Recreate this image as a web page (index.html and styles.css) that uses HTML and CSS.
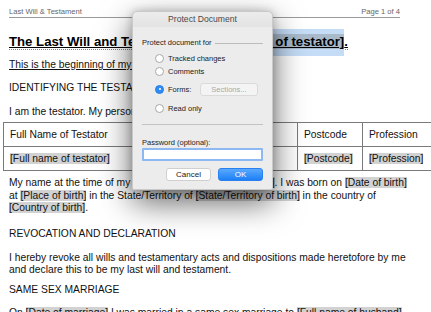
FILE: index.html
```html
<!DOCTYPE html>
<html lang="en">
<head>
    <meta charset="UTF-8">
    <meta name="viewport" content="width=device-width, initial-scale=1.0">
    <title>Last Will &amp; Testament</title>
    <link rel="stylesheet" href="styles.css">
</head>
<body>
    <div class="page">
        <div class="doc-header">
            <span>Last Will &amp; Testament</span>
            <span>Page 1 of 4</span>
        </div>

        <h1 class="title"><span class="squiggle">The Last Will and Testament of <span class="selected"><span class="field">[Full name of testator]</span></span>.</span></h1>

        <p class="lead">This is the beginning of my will.</p>

        <p class="heading">IDENTIFYING THE TESTATOR</p>
        <p class="intro">I am the testator. My personal details are as follows:</p>

        <table class="details">
            <tr>
                <td class="col-name">Full Name of Testator</td>
                <td class="col-address">Address</td>
                <td class="col-postcode">Postcode</td>
                <td class="col-job">Profession</td>
            </tr>
            <tr>
                <td><span class="field">[Full name of testator]</span></td>
                <td><span class="field">[Address]</span></td>
                <td><span class="field">[Postcode]</span></td>
                <td><span class="field">[Profession]</span></td>
            </tr>
        </table>

        <p class="birth">My name at the time of my birth was <span class="field">[Full name(s) at birth]</span>. I was born on <span class="field">[Date of birth]</span><br>
        at <span class="field">[Place of birth]</span> in the State/Territory of <span class="field">[State/Territory of birth]</span> in the country of<br>
        <span class="field">[Country of birth]</span>.</p>

        <p class="heading revoke">REVOCATION AND DECLARATION</p>
        <p class="declare">I hereby revoke all wills and testamentary acts and dispositions made heretofore by me<br>
        and declare this to be my last will and testament.</p>

        <p class="heading marriage">SAME SEX MARRIAGE</p>
        <p class="married">On <span class="field">[Date of marriage]</span> I was married in a same sex marriage to <span class="field">[Full name of husband]</span></p>
    </div>

    <div class="dialog">
        <div class="dialog-title">Protect Document</div>
        <div class="dialog-body">
            <div class="group-label">
                <span>Protect document for</span>
                <span class="rule"></span>
            </div>
            <div class="option first">
                <span class="radio"></span>
                <span>Tracked changes</span>
            </div>
            <div class="option">
                <span class="radio"></span>
                <span>Comments</span>
            </div>
            <div class="option forms">
                <span class="radio checked"></span>
                <span class="forms-label">Forms:</span>
                <span class="btn-sections">Sections...</span>
            </div>
            <div class="option readonly">
                <span class="radio"></span>
                <span>Read only</span>
            </div>
            <div class="separator"></div>
            <div class="password-label">Password (optional):</div>
            <div class="password-box"></div>
            <div class="buttons">
                <span class="btn">Cancel</span>
                <span class="btn btn-ok">OK</span>
            </div>
        </div>
    </div>
</body>
</html>
```

FILE: styles.css
```css
body {
    margin: 0;
    background: #fff;
    font-family: "Liberation Sans", Arial, sans-serif;
    font-size: 10.3px;
    color: #111;
    overflow: hidden;
    height: 312px;
}
p {
    margin: 0;
    line-height: 12px;
    white-space: nowrap;
}
.page {
    padding: 7px 0 0 9px;
}
.doc-header {
    width: 391px;
    display: flex;
    justify-content: space-between;
    font-size: 7.6px;
    line-height: 10px;
    color: #666;
    border-bottom: 1px solid #9a9a9a;
}
.title {
    margin: 16px 0 0;
    font-size: 13.2px;
    line-height: 16px;
    white-space: nowrap;
    text-decoration: underline;
    color: #000;
}
.squiggle {
    border-bottom: 1px dotted #3fb43f;
}
.selected {
    background: #c4dcf6;
    padding: 5px 0 7px;
}
.title .field {
    background: #a9bacb;
}
.field {
    background: #d2d2d2;
}
.lead {
    margin-top: 9px;
    text-decoration: underline;
}
.heading {
    margin-top: 11px;
}
.intro {
    margin-top: 12px;
}
.details {
    margin: 4px 0 0 -6px;
    width: 440px;
    border-collapse: collapse;
    white-space: nowrap;
}
.details td {
    border: 1px solid #7a7a7a;
    padding: 0 6px;
    height: 23px;
    font-size: 10.3px;
}
.col-name { width: 140px; }
.col-address { width: 128px; }
.col-postcode { width: 52px; }
.birth {
    margin-top: 6px;
    line-height: 12.5px;
}
.revoke {
    margin-top: 13px;
}
.declare {
    margin-top: 12px;
    line-height: 12.5px;
}
.marriage {
    margin-top: 7px;
}
.married {
    margin-top: 11px;
}

/* dialog */
.dialog {
    position: absolute;
    left: 132px;
    top: 11px;
    width: 141px;
    height: 179px;
    box-sizing: border-box;
    background: #ececec;
    border: 1px solid #c9c9c9;
    border-radius: 5px 5px 2px 2px;
    box-shadow: 0 12px 32px rgba(0, 0, 0, 0.62), 0 0 8px rgba(0, 0, 0, 0.2);
    font-size: 7.5px;
    color: #222;
}
.dialog-title {
    height: 15px;
    line-height: 15px;
    text-align: center;
    font-size: 8.6px;
    color: #4a4a4a;
    background: linear-gradient(#ececec, #e3e3e3);
    border-radius: 5px 5px 0 0;
}
.dialog-body {
    padding: 10px 9px 0 9px;
    display: flex;
    flex-direction: column;
}
.group-label {
    display: flex;
    align-items: center;
    gap: 3px;
    height: 10px;
}
.group-label .rule {
    flex: 1;
    height: 1px;
    background: #bcbcbc;
    margin-top: 2px;
}
.option {
    display: flex;
    align-items: center;
    gap: 4px;
    height: 10px;
    margin: 3px 0 0 13px;
}
.option.first {
    margin-top: 6px;
}
.option.forms {
    margin-top: 7px;
    height: 12px;
}
.option.readonly {
    margin-top: 8px;
}
.radio {
    width: 7px;
    height: 7px;
    border: 1px solid #a8a8a8;
    border-radius: 50%;
    background: #fff;
    flex: none;
}
.radio.checked {
    background: #2d8cf6;
    border-color: #2a7fe0;
    position: relative;
}
.radio.checked::after {
    content: "";
    position: absolute;
    left: 2.5px;
    top: 2.5px;
    width: 2px;
    height: 2px;
    border-radius: 50%;
    background: #fff;
}
.forms-label {
    width: 28px;
}
.btn-sections {
    width: 56px;
    height: 11px;
    line-height: 11px;
    text-align: center;
    background: #f4f4f4;
    border: 1px solid #dadada;
    border-radius: 3px;
    color: #a8a8a8;
    font-size: 7.6px;
}
.separator {
    height: 1px;
    background: #c2c2c2;
    margin-top: 11px;
}
.password-label {
    margin-top: 13px;
    height: 10px;
    line-height: 10px;
}
.password-box {
    margin-top: 0;
    height: 9px;
    background: #fff;
    border: 2px solid #8db8f2;
    border-radius: 1px;
}
.buttons {
    display: flex;
    justify-content: flex-end;
    gap: 7px;
    margin-top: 7px;
}
.btn {
    width: 43px;
    height: 11px;
    line-height: 11px;
    text-align: center;
    background: #fff;
    border: 1px solid #cfcfcf;
    border-radius: 3px;
    font-size: 8px;
}
.btn-ok {
    background: linear-gradient(#5aa9ff, #1d7ff6);
    border-color: #2a80ee;
    color: #fff;
}
```
